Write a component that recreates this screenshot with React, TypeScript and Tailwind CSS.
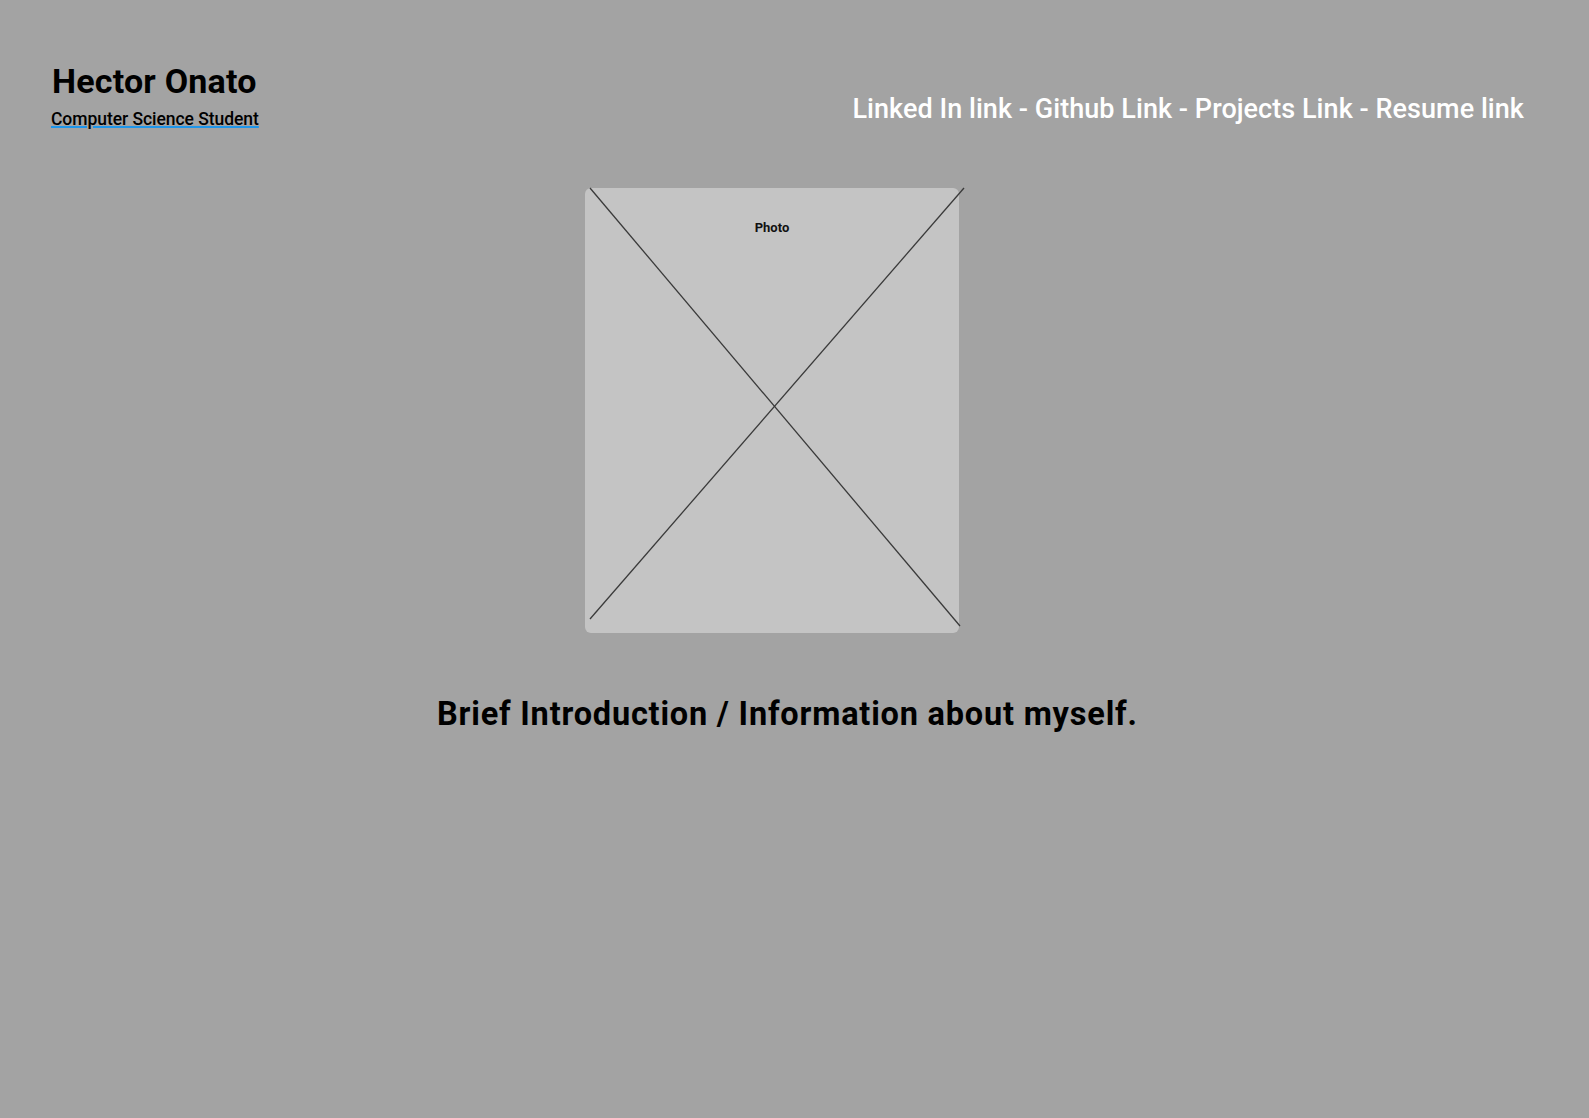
import React from "react";

export default function App() {
  return (
    <div
      className="min-h-[1118px] w-full bg-[#a3a3a3] text-black"
      style={{ fontFamily: "Roboto, 'Noto Sans', sans-serif" }}
    >
      <header className="flex items-start justify-between pl-[52px] pr-[65px] pt-[64px]">
        <div className="flex flex-col">
          <h1 className="text-[34px] leading-[34px] font-bold tracking-[0.2px] whitespace-nowrap">Hector Onato</h1>
          <p className="mt-[13px] -ml-[1px] text-[17.5px] leading-[17.5px] font-medium tracking-[-0.05px] whitespace-nowrap underline decoration-[#1e96eb] decoration-2 underline-offset-[1px]">
            Computer Science Student
          </p>
        </div>
        <nav className="mt-[32px] text-[27px] leading-[27px] font-medium tracking-[0.05px] text-white whitespace-nowrap">
          Linked In link - Github Link - Projects Link - Resume link
        </nav>
      </header>

      <main className="flex flex-col">
        <div className="ml-[585px] mt-[59px] relative h-[445px] w-[374px] rounded-[6px] bg-[#c4c4c4]">
          <p className="pt-[33px] text-center text-[13px] leading-[13px] font-bold text-[#111]">Photo</p>
          <svg
            className="absolute left-0 top-0 overflow-visible pointer-events-none"
            width="374"
            height="445"
            viewBox="0 0 374 445"
          >
            <line x1="5" y1="0" x2="375" y2="438" stroke="#3a3a3a" strokeWidth="1.3" />
            <line x1="379" y1="0" x2="5" y2="431" stroke="#3a3a3a" strokeWidth="1.3" />
          </svg>
        </div>

        <h2 className="ml-[437px] mt-[65px] text-[32.5px] leading-[32.5px] font-bold tracking-[0.8px] whitespace-nowrap">
          Brief Introduction / Information about myself.
        </h2>
      </main>
    </div>
  );
}
